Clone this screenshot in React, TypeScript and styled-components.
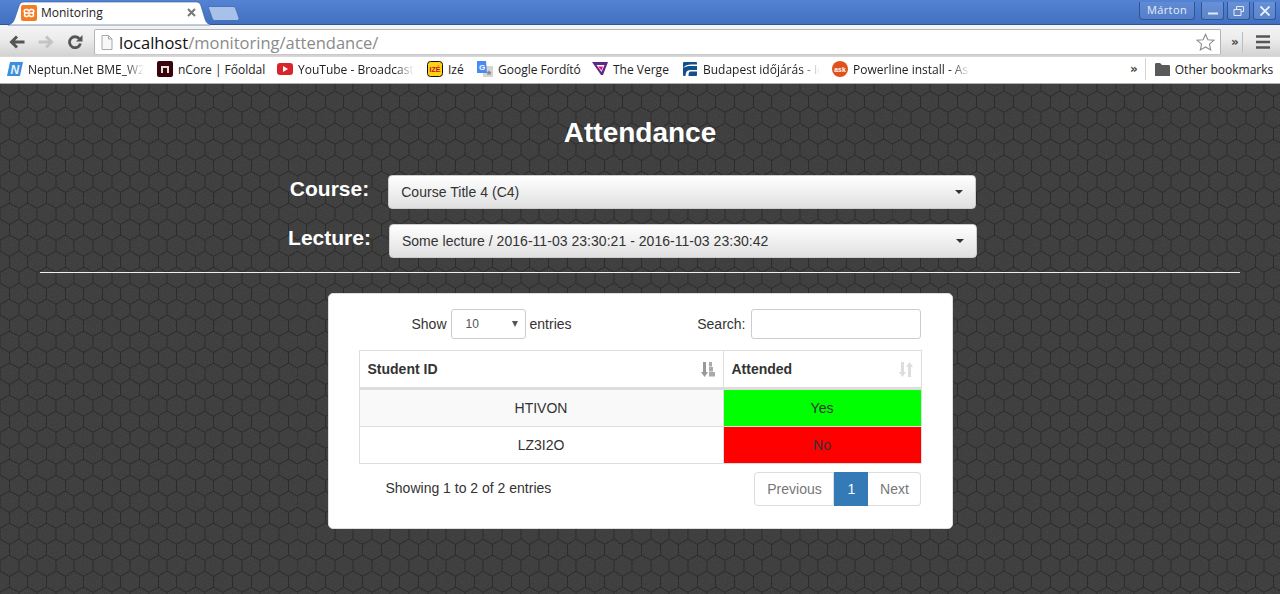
import React from "react";
import styled, { createGlobalStyle } from "styled-components";

const hex = encodeURIComponent(
  `<svg xmlns="http://www.w3.org/2000/svg" width="18.6" height="32" viewBox="0 0 18.6 32"><rect width="18.6" height="32" fill="#434343"/><g fill="none" stroke="#2e2e2e" stroke-width="1"><path d="M0 0L9.3 5.33L18.6 0M9.3 5.33V16M0 21.33L9.3 16L18.6 21.33M0 21.33V32M18.6 21.33V32"/></g></svg>`
);
const noise = encodeURIComponent(
  `<svg xmlns="http://www.w3.org/2000/svg" width="128" height="128"><filter id="n"><feTurbulence type="fractalNoise" baseFrequency="0.9" numOctaves="2" stitchTiles="stitch"/><feColorMatrix values="0 0 0 0 0 0 0 0 0 0 0 0 0 0 0 0 0 0 0.25 -0.08"/></filter><rect width="128" height="128" filter="url(#n)"/></svg>`
);

const Global = createGlobalStyle`
  html, body { margin: 0; padding: 0; height: 100%; overflow: hidden; background: #3f3f3f; }
  * { box-sizing: border-box; }
  body { font-family: "Liberation Sans", Arial, sans-serif; font-size: 14px; color: #333; }
`;

const Window = styled.div`
  width: 1280px;
  height: 594px;
  display: flex;
  flex-direction: column;
  overflow: hidden;
`;

/* ---------- browser chrome ---------- */
const TitleBar = styled.div`
  height: 25px;
  flex: none;
  display: flex;
  align-items: flex-start;
  background: linear-gradient(#5583d3, #4170c0);
  border-bottom: 1px solid #2f5596;
  padding: 1px 1px 0 8px;
`;
const Tab = styled.div`
  position: relative;
  width: 202px;
  height: 25px;
  display: flex;
  align-items: center;
  padding: 0 0 2px 13px;
  gap: 4px;
  font: 12px "Open Sans", "Noto Sans", sans-serif;
  color: #222;
`;
const TabShape = styled.svg`
  position: absolute;
  left: 0;
  top: 0;
  z-index: 0;
`;
const TabIcon = styled.svg`
  position: relative;
  flex: none;
`;
const TabTitle = styled.span`
  position: relative;
  flex: 1;
`;
const TabClose = styled.svg`
  position: relative;
  flex: none;
  margin-right: 14px;
`;
const NewTab = styled.svg`
  flex: none;
  margin: 5px 0 0 -2px;
`;
const Spacer = styled.div`
  flex: 1;
`;
const Profile = styled.div`
  width: 56px;
  height: 18px;
  margin: 1px 6px 0 0;
  border: 1px solid #2f5596;
  border-top: 0;
  border-radius: 0 0 4px 4px;
  text-align: center;
  font: 11px/16px "Open Sans", "Noto Sans", sans-serif;
  letter-spacing: 0.4px;
  color: #e8edf6;
  background: rgba(255, 255, 255, 0.08);
`;
const WinButton = styled.div`
  width: 23px;
  height: 18px;
  margin: 1px 3px 0 0;
  border: 1px solid #2f5596;
  border-top: 0;
  border-radius: 0 0 3px 3px;
  display: flex;
  align-items: center;
  justify-content: center;
  background: rgba(255, 255, 255, 0.12);
`;

const Toolbar = styled.div`
  height: 31px;
  flex: none;
  display: flex;
  align-items: center;
  background: linear-gradient(#f4f4f4 0%, #ececec 45%, #d2d2d2 100%);
  padding: 3px 0 0 0;
`;
const NavIcon = styled.svg<{ $ml: number }>`
  flex: none;
  margin-left: ${(p) => p.$ml}px;
`;
const Omnibox = styled.div`
  width: 1127px;
  height: 26px;
  margin-left: 11px;
  flex: none;
  background: #fff;
  border: 1px solid #b4b4b4;
  border-bottom-color: #c8c8c8;
  border-radius: 2px;
  display: flex;
  align-items: center;
  padding: 0 5px 0 6px;
  font: 16.5px "Open Sans", "Noto Sans", sans-serif;
  color: #8a8a8a;
`;
const Host = styled.span`
  color: #111;
`;
const Url = styled.div`
  flex: 1;
  margin-left: 6px;
  white-space: nowrap;
`;
const ToolSep = styled.div`
  width: 1px;
  height: 20px;
  background: #bdbdbd;
  margin-left: 3px;
`;
const Chevron = styled.span<{ $ml: number }>`
  font: bold 12px "DejaVu Sans", sans-serif;
  color: #444;
  margin-left: ${(p) => p.$ml}px;
`;

const BookmarkBar = styled.div`
  height: 28px;
  flex: none;
  display: flex;
  align-items: center;
  background: #fff;
  border-top: 1px solid #d8d8d8;
  border-bottom: 1px solid #b0b0b0;
  padding: 0 0 2px 7px;
  font: 12px "Open Sans", "Noto Sans", sans-serif;
  color: #222;
`;
const Bookmark = styled.div<{ $w: number }>`
  width: ${(p) => p.$w}px;
  flex: none;
  display: flex;
  align-items: center;
  gap: 5px;
`;
const BookmarkText = styled.span<{ $fade?: boolean; $tw?: number }>`
  white-space: nowrap;
  overflow: hidden;
  width: ${(p) => (p.$tw ? `${p.$tw}px` : "auto")};
  ${(p) =>
    p.$fade
      ? "-webkit-mask-image: linear-gradient(to right, #000 84%, transparent 100%); mask-image: linear-gradient(to right, #000 84%, transparent 100%);"
      : ""}
`;
const BarSep = styled.div`
  width: 1px;
  height: 22px;
  background: #d4d4d4;
  margin: 0 9px 0 7px;
`;
const FavSvg = styled.svg`
  flex: none;
`;

/* ---------- page ---------- */
const Main = styled.main`
  flex: 1;
  padding: 33px 40px 0;
  background-color: #434343;
  background-image: url("data:image/svg+xml,${noise}"), url("data:image/svg+xml,${hex}");
  background-position: 0 0, 0 7px;
`;
const Heading = styled.h2`
  margin: 0 0 27px;
  height: 31px;
  text-align: center;
  font-size: 28px;
  line-height: 31px;
  font-weight: 700;
  color: #fff;
`;
const FormRow = styled.div<{ $gap: number; $pad: number; $mb: number }>`
  display: flex;
  justify-content: center;
  gap: ${(p) => p.$gap}px;
  padding-right: ${(p) => p.$pad}px;
  margin-bottom: ${(p) => p.$mb}px;
`;
const FormLabel = styled.label`
  font-size: 21px;
  line-height: 28px;
  font-weight: 700;
  color: #fff;
`;
const Dropdown = styled.button`
  width: 588px;
  height: 34px;
  display: flex;
  align-items: center;
  justify-content: space-between;
  padding: 0 12px;
  font: 14px "Liberation Sans", Arial, sans-serif;
  letter-spacing: 0.035px;
  color: #333;
  background: linear-gradient(#fff, #e0e0e0);
  border: 1px solid #ccc;
  border-radius: 4px;
`;
const Caret = styled.span`
  width: 0;
  height: 0;
  border-top: 4px solid #333;
  border-left: 4px solid transparent;
  border-right: 4px solid transparent;
`;
const Rule = styled.hr`
  margin: 14px 0 20px;
  border: 0;
  border-top: 1px solid #eee;
`;
const Card = styled.section`
  width: 625px;
  height: 236px;
  margin: 0 auto;
  padding: 15px 31px 0 30px;
  background: #fff;
  border: 1px solid #ddd;
  border-radius: 5px;
`;
const TopBar = styled.div`
  display: flex;
  align-items: center;
  justify-content: space-between;
  height: 30px;
  margin-bottom: 11px;
  padding-left: 53px;
`;
const Field = styled.label<{ $gap: number }>`
  display: flex;
  align-items: center;
  gap: ${(p) => p.$gap}px;
`;
const SelectBox = styled.div`
  position: relative;
  width: 75px;
  height: 30px;
`;
const Select = styled.select`
  width: 100%;
  height: 100%;
  appearance: none;
  padding: 0 14px;
  font: 12px "Liberation Sans", Arial, sans-serif;
  color: #555;
  background: #fff;
  border: 1px solid #ccc;
  border-radius: 3px;
`;
const SelectArrow = styled.span`
  position: absolute;
  right: 8px;
  top: 12px;
  width: 0;
  height: 0;
  border-top: 6px solid #555;
  border-left: 3px solid transparent;
  border-right: 3px solid transparent;
`;
const SearchInput = styled.input`
  width: 170px;
  height: 30px;
  border: 1px solid #ccc;
  border-radius: 3px;
  background: #fff;
`;
const Table = styled.table`
  width: 562px;
  border-collapse: collapse;
  table-layout: fixed;
`;
const Th = styled.th<{ $w: number }>`
  width: ${(p) => p.$w}px;
  height: 38px;
  padding: 0 8px;
  text-align: left;
  font-size: 14px;
  font-weight: 700;
  color: #333;
  border: 1px solid #ddd;
  border-bottom: 3px solid #ddd;
`;
const ThInner = styled.div`
  display: flex;
  align-items: center;
  justify-content: space-between;
`;
const Row = styled.tr<{ $odd?: boolean }>`
  background: ${(p) => (p.$odd ? "#f9f9f9" : "#fff")};
`;
const Td = styled.td<{ $bg?: string; $h: number }>`
  height: ${(p) => p.$h}px;
  padding: 0;
  text-align: center;
  font-size: 14px;
  color: #333;
  border: 1px solid #ddd;
  background: ${(p) => p.$bg || "transparent"};
`;
const Footer = styled.div`
  display: flex;
  align-items: center;
  justify-content: space-between;
  margin-top: 8px;
  padding-left: 27px;
`;
const Info = styled.span`
  padding-bottom: 2px;
`;
const Pager = styled.div`
  display: flex;
  height: 34px;
`;
const PageBtn = styled.button<{ $w: number; $active?: boolean; $first?: boolean; $last?: boolean }>`
  width: ${(p) => p.$w}px;
  height: 34px;
  padding: 0 0 0 2px;
  font: 14px "Liberation Sans", Arial, sans-serif;
  color: ${(p) => (p.$active ? "#fff" : "#777")};
  background: ${(p) => (p.$active ? "#337ab7" : "#fff")};
  border: 1px solid ${(p) => (p.$active ? "#337ab7" : "#ddd")};
  border-left-width: ${(p) => (p.$first || p.$active ? 1 : 0)}px;
  border-radius: ${(p) => (p.$first ? "4px 0 0 4px" : p.$last ? "0 4px 4px 0" : "0")};
`;

/* ---------- icons ---------- */
const Xampp = () => (
  <TabIcon width="16" height="16" viewBox="0 0 16 16">
    <rect width="16" height="16" rx="2" fill="#f57c22" />
    <path
      d="M5 4.500h1.500L8 6l1.500-1.500H11a1.700 1.700 0 0 1 0 3.500H10M5 4.500a1.700 1.700 0 0 0 0 3.500H6M6 8L4.700 8A1.800 1.800 0 0 0 5 11.500h1.500L8 10l1.500 1.500H11a1.800 1.800 0 0 0 .3-3.500L10 8M6 8h4"
      fill="none"
      stroke="#fff"
      strokeWidth="1.6"
    />
  </TabIcon>
);
const Arrow = ({ color, flip, ml }: { color: string; flip?: boolean; ml: number }) => (
  <NavIcon $ml={ml} width="16" height="14" viewBox="0 0 16 14">
    <path
      transform={flip ? "translate(16 0) scale(-1 1)" : undefined}
      d="M8 1.500L2.500 7L8 12.500M3 7H15.500"
      fill="none"
      stroke={color}
      strokeWidth="3"
    />
  </NavIcon>
);
const Reload = () => (
  <NavIcon $ml={13} width="16" height="14" viewBox="0 0 16 14">
    <path d="M12.500 4A5.500 5.500 0 1 0 13.400 8.500" fill="none" stroke="#555" strokeWidth="2.8" />
    <path d="M9 6.500H15.500V0z" fill="#555" />
  </NavIcon>
);
const Page = () => (
  <svg width="12" height="15" viewBox="0 0 12 15">
    <path d="M1 .5h6.500L11 4v10.500H1z" fill="#f8f8f8" stroke="#a8a8a8" />
    <path d="M7.500.5V4H11" fill="none" stroke="#a8a8a8" />
  </svg>
);
const Star = () => (
  <svg width="19" height="19" viewBox="0 0 19 19">
    <path
      d="M9.500 1.300l2.400 5.400 5.900.6-4.400 3.900 1.300 5.800-5.200-3-5.200 3 1.300-5.800L1.200 7.300l5.900-.6z"
      fill="#fff"
      stroke="#8c8c8c"
      strokeWidth="1.1"
    />
  </svg>
);

const Fav = ({ children }: { children: React.ReactNode }) => (
  <FavSvg width="16" height="16" viewBox="0 0 16 16">
    {children}
  </FavSvg>
);
const favText = { fontFamily: "Liberation Sans, sans-serif", fontWeight: 700 } as const;

const bookmarks: { w: number; tw?: number; fade?: boolean; label: string; icon: React.ReactNode }[] = [
  {
    w: 150, tw: 116, fade: true, label: "Neptun.Net BME_W2",
    icon: (
      <Fav>
        <path d="M3 1h13l-3 14H0z" fill="#3b8fdc" />
        <text x="3.500" y="12.500" fontSize="12" fill="#e8f3ff" fontStyle="italic" {...favText}>N</text>
      </Fav>
    ),
  },
  {
    w: 120, label: "nCore | Főoldal",
    icon: (
      <Fav>
        <rect width="16" height="16" rx="2" fill="#3a0508" />
        <path d="M4 12V5h8v7h-2V7H6v5z" fill="#e8e0e0" />
      </Fav>
    ),
  },
  {
    w: 150, tw: 116, fade: true, label: "YouTube - Broadcast",
    icon: (
      <Fav>
        <rect y="2" width="16" height="12" rx="3" fill="#d9252a" />
        <path d="M6 5l5 3-5 3z" fill="#fff" />
      </Fav>
    ),
  },
  {
    w: 50, label: "Izé",
    icon: (
      <Fav>
        <rect x=".5" y=".5" width="15" height="15" rx="3" fill="#fcd116" stroke="#111" />
        <text x="8" y="11" fontSize="7" textAnchor="middle" fill="#c1121f" {...favText}>IZÉ</text>
      </Fav>
    ),
  },
  {
    w: 115, label: "Google Fordító",
    icon: (
      <Fav>
        <rect x="6" y="5" width="10" height="11" fill="#d5d5d5" />
        <path d="M0 0h9l1 12H0z" fill="#4a8af4" />
        <text x="2" y="9" fontSize="8" fill="#fff" {...favText}>G</text>
        <path d="M12 9l.9 1.800 1.900.2-1.400 1.300.4 1.900-1.800-1-1.800 1 .4-1.900L9.200 11l1.900-.2z" fill="#888" />
      </Fav>
    ),
  },
  {
    w: 90, label: "The Verge",
    icon: (
      <Fav>
        <path d="M0 1h16l-5 13H9z" fill="#5b2a86" />
        <path d="M4.500 4h8L9.500 11z" fill="#fff" />
        <path d="M6 5.500h5L9.500 9.500z" fill="#e5127d" />
      </Fav>
    ),
  },
  {
    w: 150, tw: 117, fade: true, label: "Budapest időjárás - Id",
    icon: (
      <Fav>
        <rect x="1" y="1" width="14" height="14" rx="1" fill="#12508c" />
        <path d="M3.500 15c0-4 1.500-6 4.500-6h7v1.500H8.500C7 10.500 6.500 12 6.500 15zM1 7c2-3 5-3.500 8-3.500h6V5H9C6 5 3.500 5.500 1 7z" fill="#fff" />
      </Fav>
    ),
  },
  {
    w: 298, tw: 117, fade: true, label: "Powerline install - Ask",
    icon: (
      <Fav>
        <circle cx="8" cy="8" r="8" fill="#e0511b" />
        <text x="8" y="10.500" fontSize="6.800" fill="#fff" textAnchor="middle" {...favText}>ask</text>
      </Fav>
    ),
  },
];

export default function App() {
  return (
    <Window>
      <Global />
      <TitleBar>
        <Tab>
          <TabShape width="202" height="25" viewBox="0 0 202 25">
            <path d="M0 24C5 23 6 20 8 14L11 5C12 2 13 1 16 1H188C191 1 192 2 193 5L197 18C198 22 200 23 204 24z" fill="#fff" stroke="#2f5596" strokeWidth="0.6" />
          </TabShape>
          <Xampp />
          <TabTitle>Monitoring</TabTitle>
          <TabClose width="9" height="9" viewBox="0 0 9 9">
            <path d="M1 1l7 7M8 1L1 8" stroke="#777" strokeWidth="2" />
          </TabClose>
        </Tab>
        <NewTab width="32" height="15" viewBox="0 0 32 15">
          <path d="M0 0.5H25C26 0.5 27 1 27.5 2L31 12C31.400 13.500 30.500 14.500 29 14.500H7C6 14.500 5 14 4.500 13z" fill="#a9c0e9" stroke="#3d68b0" strokeWidth="0.8" />
        </NewTab>
        <Spacer />
        <Profile>Márton</Profile>
        <WinButton>
          <svg width="10" height="10" viewBox="0 0 10 10"><path d="M0 7.500h10" stroke="#e4e9f4" strokeWidth="2" /></svg>
        </WinButton>
        <WinButton>
          <svg width="12" height="10" viewBox="0 0 12 10"><path d="M3.500 3V.5h7v5H8M1 3.500h7v6H1z" fill="none" stroke="#e4e9f4" /></svg>
        </WinButton>
        <WinButton>
          <svg width="10" height="10" viewBox="0 0 10 10"><path d="M.5.5l9 9M9.500.5l-9 9" stroke="#eef2fa" strokeWidth="1.8" /></svg>
        </WinButton>
      </TitleBar>
      <Toolbar>
        <Arrow color="#555" ml={9} />
        <Arrow color="#c4c4c4" flip ml={13} />
        <Reload />
        <Omnibox>
          <Page />
          <Url><Host>localhost</Host>/monitoring/attendance/</Url>
          <Star />
        </Omnibox>
        <Chevron $ml={10}>»</Chevron>
        <ToolSep />
        <NavIcon $ml={13} width="14" height="14" viewBox="0 0 14 14">
          <path d="M0 1.500h14M0 7h14M0 12.500h14" stroke="#555" strokeWidth="2.6" />
        </NavIcon>
      </Toolbar>
      <BookmarkBar>
        {bookmarks.map((b) => (
          <Bookmark key={b.label} $w={b.w}>
            {b.icon}
            <BookmarkText $fade={b.fade} $tw={b.tw}>{b.label}</BookmarkText>
          </Bookmark>
        ))}
        <Chevron $ml={0}>»</Chevron>
        <BarSep />
        <Bookmark $w={120}>
          <FavSvg width="15" height="13" viewBox="0 0 15 13">
            <path d="M0 1.500C0 .5.5 0 1.500 0H5l2 2h6.500C14.500 2 15 2.500 15 3.500V13H0z" fill="#5a5a5a" />
          </FavSvg>
          <BookmarkText>Other bookmarks</BookmarkText>
        </Bookmark>
      </BookmarkBar>
      <Main>
        <Heading>Attendance</Heading>
        <FormRow $gap={19} $pad={14} $mb={15}>
          <FormLabel>Course:</FormLabel>
          <Dropdown><span>Course Title 4 (C4)</span><Caret /></Dropdown>
        </FormRow>
        <FormRow $gap={18} $pad={15} $mb={0}>
          <FormLabel>Lecture:</FormLabel>
          <Dropdown><span>Some lecture / 2016-11-03 23:30:21 - 2016-11-03 23:30:42</span><Caret /></Dropdown>
        </FormRow>
        <Rule />
        <Card>
          <TopBar>
            <Field $gap={4}>
              Show
              <SelectBox>
                <Select defaultValue="10"><option>10</option></Select>
                <SelectArrow />
              </SelectBox>
              entries
            </Field>
            <Field $gap={5}>
              Search:
              <SearchInput />
            </Field>
          </TopBar>
          <Table>
            <thead>
              <tr>
                <Th $w={364}>
                  <ThInner>
                    Student ID
                    <svg width="14" height="15" viewBox="0 0 14 15">
                      <path d="M2 0h3v10h2l-3.500 5L0 10h2z" fill="#999" />
                      <path d="M8 0h3v4.500H8zM8 5h4v4.500H8zM8 10h6v4.500H8z" fill="#aaa" />
                    </svg>
                  </ThInner>
                </Th>
                <Th $w={198}>
                  <ThInner>
                    Attended
                    <svg width="14" height="15" viewBox="0 0 14 15">
                      <path d="M2 0h3v10h2l-3.500 5L0 10h2z" fill="#ddd" />
                      <path d="M9 15h3V5h2L10.500 0 7 5h2z" fill="#ddd" />
                    </svg>
                  </ThInner>
                </Th>
              </tr>
            </thead>
            <tbody>
              <Row $odd>
                <Td $h={38}>HTIVON</Td>
                <Td $h={38} $bg="#00ff00">Yes</Td>
              </Row>
              <Row>
                <Td $h={37}>LZ3I2O</Td>
                <Td $h={37} $bg="#ff0000">No</Td>
              </Row>
            </tbody>
          </Table>
          <Footer>
            <Info>Showing 1 to 2 of 2 entries</Info>
            <Pager>
              <PageBtn $w={80} $first>Previous</PageBtn>
              <PageBtn $w={34} $active>1</PageBtn>
              <PageBtn $w={53} $last>Next</PageBtn>
            </Pager>
          </Footer>
        </Card>
      </Main>
    </Window>
  );
}
